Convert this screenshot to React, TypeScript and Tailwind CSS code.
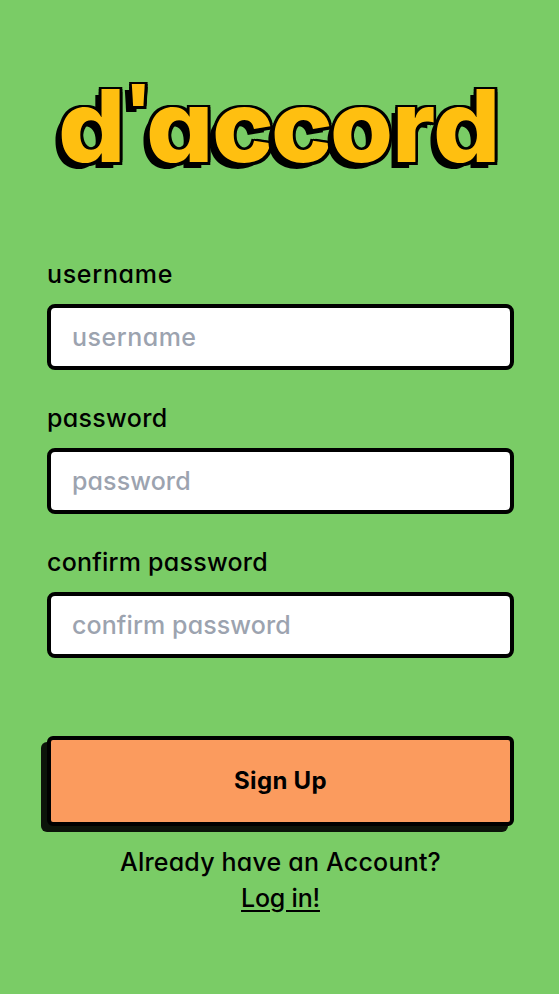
const fields = [
  { id: 'username', type: 'text', label: 'tracking-[0.68px]', spacing: 'tracking-[0.5px]' },
  { id: 'password', type: 'password', label: 'tracking-[0.32px]', spacing: 'tracking-[0.1px]' },
  { id: 'confirm password', type: 'password', label: 'tracking-[0.23px]', spacing: 'tracking-[0.1px]' },
];

const letters = [
  { char: 'd', style: 'w-[66px] scale-x-106' },
  { char: "'", style: 'w-[22px] text-[70px] leading-[76px] scale-x-115' },
  { char: 'a', style: 'w-[66px] scale-x-106' },
  { char: 'c', style: 'w-[59px] scale-x-104' },
  { char: 'c', style: 'w-[59px] scale-x-104' },
  { char: 'o', style: 'w-[62px] scale-x-102' },
  { char: 'r', style: 'w-[41px] scale-x-103' },
  { char: 'd', style: 'w-[65px] scale-x-106' },
];

export default function App() {
  return (
    <main className="flex min-h-screen flex-col bg-[#7acc66] px-[47px] pr-[45px] font-[Inter,sans-serif] text-[25px] font-[550] text-black [font-feature-settings:'cv11']">
      <h1 className="mt-[72px] flex h-[108px] whitespace-nowrap pl-[11px] text-[100px] font-extrabold leading-[108px] text-[#ffbf10] [text-shadow:-2.5px_-2.5px_#000,0_-2.5px_#000,2.5px_-2.5px_#000,-2.5px_0_#000,2.5px_0_#000,-2.5px_2.5px_#000,0_2.5px_#000,2.5px_2.5px_#000,-6px_6px_#000]">
        {letters.map((l, i) => (
          <span key={i} className={`shrink-0 origin-left ${l.style}`}>{l.char}</span>
        ))}
      </h1>
      <form className="mt-[76px] flex flex-col">
        {fields.map((f) => (
          <div key={f.id} className="mb-6 flex flex-col">
            <label htmlFor={f.id} className="mb-3 h-9 leading-9">
              <span className={f.label}>{f.id}</span>
            </label>
            <input
              id={f.id}
              type={f.type}
              placeholder={f.id}
              className={`mb-1.5 h-[66px] w-full rounded-lg border-4 border-black bg-white px-[21px] font-medium placeholder:text-[#9ca3af] ${f.spacing}`}
            />
          </div>
        ))}
        <button className="mt-12 h-[90px] rounded-md border-4 border-black bg-[#fb9b5e] text-2xl font-bold tracking-[0.3px] shadow-[-6px_6px_0_rgba(0,0,0,0.9)]">
          Sign Up
        </button>
      </form>
      <p className="mt-[18px] text-center leading-9 tracking-[0.2px]">
        Already have an Account?
        <br />
        <a href="#" className="tracking-[-0.2px] underline decoration-2 underline-offset-[3px]">Log in!</a>
      </p>
    </main>
  );
}
